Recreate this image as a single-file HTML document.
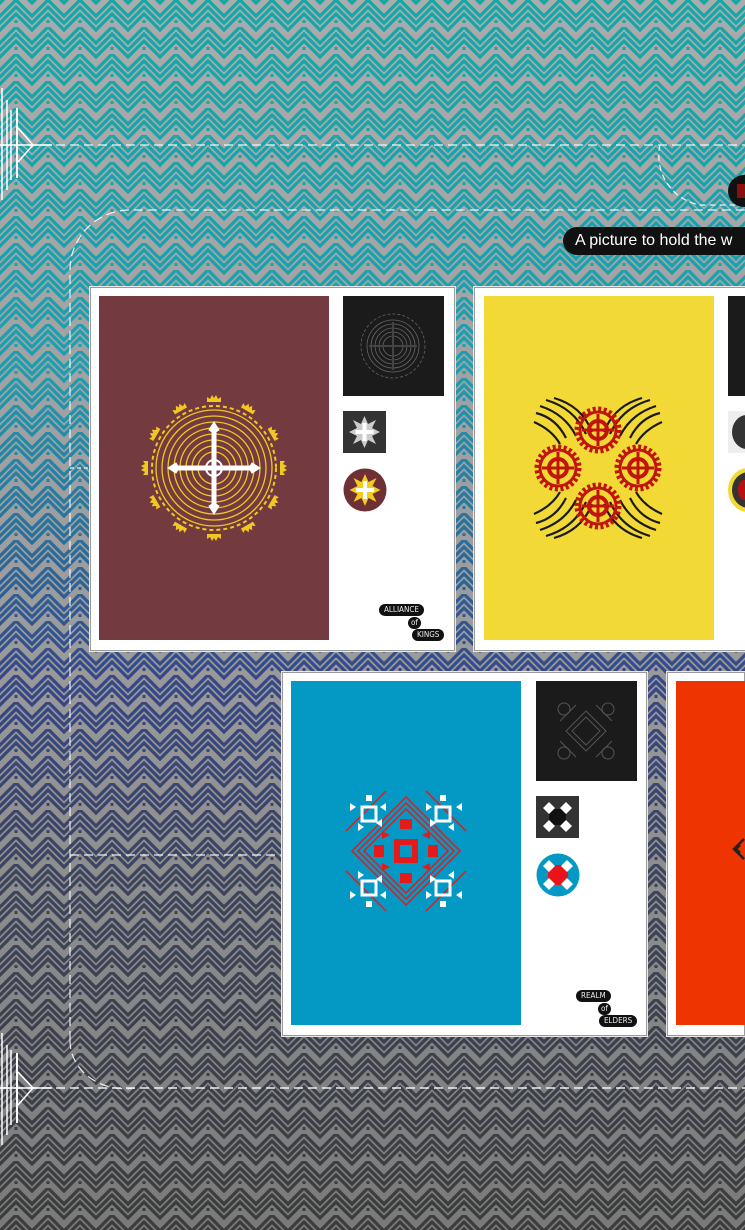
<!DOCTYPE html>
<html><head><meta charset="utf-8">
<style>
html,body{margin:0;padding:0;width:745px;height:1230px;overflow:hidden;position:relative;font-family:"Liberation Sans",sans-serif}
.bg{position:absolute;left:0;top:0}
.frame{position:absolute;border:1px solid #e8e8e8;background:#fff;box-shadow:0 0 0 1px #9a9a9a inset,0 0 0 3px #fff inset}
.abs{position:absolute}
.pill{position:absolute;background:#111;color:#fff;border-radius:12px 0 0 12px;font-family:"Liberation Sans",sans-serif;overflow:hidden}
.lbl{position:absolute;background:#111;color:#eee;font-size:8px;line-height:12px;border-radius:6px;padding:0 5px;font-family:"DejaVu Sans Condensed","Liberation Sans",sans-serif}
</style></head><body>
<svg class="bg" width="745" height="1230" viewBox="0 0 745 1230">
<defs>
<linearGradient id="bgg" x1="0" y1="0" x2="0" y2="1">
<stop offset="0" stop-color="#ababab"/><stop offset="0.5" stop-color="#9c9c9c"/><stop offset="1" stop-color="#7a7a7a"/>
</linearGradient>
<linearGradient id="sg" x1="0" y1="0" x2="0" y2="1">
<stop offset="0" stop-color="#12a8a8"/><stop offset="0.3" stop-color="#1a9fb2"/><stop offset="0.55" stop-color="#35478a"/><stop offset="0.72" stop-color="#3c435c"/><stop offset="1" stop-color="#3b3c3a"/>
</linearGradient>
<pattern id="chev" width="32" height="27" patternUnits="userSpaceOnUse">
<g fill="none" stroke="#fff" stroke-width="3.2">
<polyline points="-2,18 16,0 34,18"/>
<polyline points="-2,25 16,7 34,25"/>
<polyline points="-2,32 16,14 34,32"/>
<polyline points="-2,-9 16,-27 34,-9"/>
<polyline points="-2,-2 16,-20 34,-2"/>
<polyline points="-2,5 16,-13 34,5"/>
</g>
<rect x="14.5" y="20" width="3" height="3" fill="#fff"/>
</pattern>
<mask id="m"><rect width="745" height="1230" fill="url(#chev)"/></mask>
</defs>
<rect width="745" height="1230" fill="url(#bgg)"/>
<rect width="745" height="1230" fill="url(#sg)" mask="url(#m)"/>
<g stroke="#fff" fill="none" stroke-width="1.2" opacity="0.9">
<line x1="0" y1="145" x2="745" y2="145" stroke-dasharray="9 5"/>
<line x1="0" y1="1088" x2="745" y2="1088" stroke-dasharray="9 5" stroke-width="1.5"/>
<path d="M70 1040 V270 A60 60 0 0 1 130 210 H745" stroke-dasharray="9 5"/>
<path d="M70 1040 A55 48 0 0 0 135 1088" stroke-dasharray="9 5"/>
<path d="M660 145 A50 50 0 0 0 700 205 H745" stroke-dasharray="6 4"/>
<line x1="70" y1="468" x2="89" y2="468" stroke-dasharray="4 3"/>
<line x1="70" y1="855" x2="281" y2="855" stroke-dasharray="9 5"/>
</g>
<g stroke="#fff" fill="none" stroke-width="1.5">
<line x1="2" y1="88" x2="2" y2="200"/><line x1="7" y1="100" x2="7" y2="190"/><line x1="11" y1="110" x2="11" y2="180"/><line x1="17" y1="108" x2="17" y2="178" stroke-width="2"/>
<path d="M18 128 L33 145 L18 162 M0 145 H52"/>
<line x1="2" y1="1033" x2="2" y2="1145"/><line x1="7" y1="1045" x2="7" y2="1135"/><line x1="11" y1="1050" x2="11" y2="1125"/><line x1="17" y1="1053" x2="17" y2="1123" stroke-width="2"/>
<path d="M18 1072 L33 1088 L18 1105 M0 1088 H52"/>
</g>
</svg>

<div class="pill" style="left:728px;top:175px;width:17px;height:32px;border-radius:16px 0 0 16px"><div style="position:absolute;left:9px;top:9px;width:8px;height:14px;background:#8a1010"></div></div>
<div class="pill" style="left:563px;top:227px;width:170px;height:28px;font-size:16px;line-height:28px;padding-left:12px;white-space:nowrap;border-radius:14px 0 0 14px">A picture to hold the w</div>

<!-- card 1 -->
<div class="frame" style="left:89px;top:286px;width:365px;height:364px"></div>
<div class="abs" style="left:99px;top:296px;width:230px;height:344px;background:#733a40"></div>
<svg class="abs" style="left:99px;top:296px" width="230" height="344">
<g transform="translate(115,172)" fill="none" stroke="#f0c820" stroke-width="1.3">
<circle r="58"/><circle r="52"/><circle r="46"/><circle r="40"/><circle r="34"/><circle r="28"/><circle r="22"/><circle r="16"/>
<circle r="62" stroke-dasharray="4 3" stroke-width="2"/>
</g>
<g transform="translate(115,172)" fill="#f0c820">
<g id="cr"><path d="M-7 -66 h14 v-5 l-3 2 -2 -4 -2 3 -2 -3 -2 4 -3 -2z"/></g>
<use href="#cr" transform="rotate(30)"/><use href="#cr" transform="rotate(60)"/><use href="#cr" transform="rotate(90)"/><use href="#cr" transform="rotate(120)"/><use href="#cr" transform="rotate(150)"/><use href="#cr" transform="rotate(180)"/><use href="#cr" transform="rotate(210)"/><use href="#cr" transform="rotate(240)"/><use href="#cr" transform="rotate(270)"/><use href="#cr" transform="rotate(300)"/><use href="#cr" transform="rotate(330)"/>
</g>
<g transform="translate(115,172)" fill="#fff" stroke="#fff">
<rect x="-2" y="-40" width="4" height="80"/><rect x="-40" y="-2" width="80" height="4"/>
<path d="M0 -46 l5 8 -5 3 -5 -3z M0 46 l5 -8 -5 -3 -5 3z M-46 0 l8 5 3 -5 -3 -5z M46 0 l-8 5 -3 -5 3 -5z"/>
<circle r="8" fill="none" stroke-width="2"/>
</g>
</svg>
<div class="abs" style="left:343px;top:296px;width:101px;height:100px;background:#1b1b1b"></div>
<svg class="abs" style="left:343px;top:296px" width="101" height="100"><g transform="translate(50,50)" fill="none" stroke="#666" stroke-width="0.8"><circle r="32" stroke-dasharray="3 2"/><circle r="26"/><circle r="22"/><circle r="18"/><circle r="14"/><circle r="10"/><path d="M0 -24V24M-24 0H24" stroke="#444" stroke-width="2"/></g></svg>
<div class="abs" style="left:343px;top:411px;width:43px;height:42px;background:#333"></div>
<svg class="abs" style="left:343px;top:411px" width="43" height="42"><polygon points="21.5,5 25,13 33,9 29,17 37,21 29,25 33,33 25,29 21.5,37 18,29 10,33 14,25 6,21 14,17 10,9 18,13" fill="#ccc"/><path d="M21.5 12V30M12.5 21H30.5" stroke="#fff" stroke-width="4"/></svg>
<svg class="abs" style="left:343px;top:468px" width="44" height="44"><circle cx="22" cy="22" r="21.5" fill="#6e2f35"/><polygon points="22,6 25.5,14 33.5,10 29.5,18 37.5,22 29.5,26 33.5,34 25.5,30 22,38 18.5,30 10.5,34 14.5,26 6.5,22 14.5,18 10.5,10 18.5,14" fill="#f3cc20"/><path d="M22 13V31M13 22H31" stroke="#fff" stroke-width="4"/></svg>
<div class="lbl" style="left:379px;top:604px">ALLIANCE</div>
<div class="lbl" style="left:408px;top:617px;padding:0 3px">of</div>
<div class="lbl" style="left:412px;top:629px">KINGS</div>

<!-- card 2 -->
<div class="frame" style="left:473px;top:286px;width:290px;height:364px"></div>
<div class="abs" style="left:484px;top:296px;width:230px;height:344px;background:#f3d936"></div>
<svg class="abs" style="left:484px;top:296px" width="230" height="344">
<g fill="none" stroke="#1a1a1a" stroke-width="2.2">
<g transform="translate(114,172)">
<path d="M-62 -55 q20 5 30 25 M-58 -62 q25 8 36 30 M-52 -68 q28 8 40 34 M-44 -70 q28 8 38 34 M-64 -46 q18 8 26 22"/>
<path d="M62 -55 q-20 5 -30 25 M58 -62 q-25 8 -36 30 M52 -68 q-28 8 -40 34 M44 -70 q-28 8 -38 34 M64 -46 q-18 8 -26 22"/>
<path d="M-62 55 q20 -5 30 -25 M-58 62 q25 -8 36 -30 M-52 68 q28 -8 40 -34 M-44 70 q28 -8 38 -34 M-64 46 q18 -8 26 -22"/>
<path d="M62 55 q-20 -5 -30 -25 M58 62 q-25 -8 -36 -30 M52 68 q-28 -8 -40 -34 M44 70 q-28 -8 -38 -34 M64 46 q-18 -8 -26 -22"/>
</g></g>
<g fill="none" stroke="#c0140c">
<g transform="translate(114,134)"><circle r="21" stroke-width="5" stroke-dasharray="3 2.5"/><circle r="18" stroke-width="3"/><circle r="9" stroke-width="4"/><path d="M-16 0H16M0 -16V16" stroke-width="3"/></g>
<g transform="translate(74,172)"><circle r="21" stroke-width="5" stroke-dasharray="3 2.5"/><circle r="18" stroke-width="3"/><circle r="9" stroke-width="4"/><path d="M-16 0H16M0 -16V16" stroke-width="3"/></g>
<g transform="translate(154,172)"><circle r="21" stroke-width="5" stroke-dasharray="3 2.5"/><circle r="18" stroke-width="3"/><circle r="9" stroke-width="4"/><path d="M-16 0H16M0 -16V16" stroke-width="3"/></g>
<g transform="translate(114,210)"><circle r="21" stroke-width="5" stroke-dasharray="3 2.5"/><circle r="18" stroke-width="3"/><circle r="9" stroke-width="4"/><path d="M-16 0H16M0 -16V16" stroke-width="3"/></g>
</g>
</svg>
<div class="abs" style="left:728px;top:296px;width:17px;height:100px;background:#1b1b1b"></div>
<div class="abs" style="left:728px;top:411px;width:17px;height:42px;background:#eee;overflow:hidden"><div style="position:absolute;left:4px;top:4px;width:30px;height:34px;border-radius:50%;background:#333"></div></div>
<div class="abs" style="left:728px;top:468px;width:17px;height:44px;overflow:hidden"><div style="position:absolute;left:0;top:0;width:40px;height:44px;border-radius:50%;background:#f3d936"></div><div style="position:absolute;left:4px;top:4px;width:34px;height:36px;border-radius:50%;background:#333"></div><div style="position:absolute;left:10px;top:12px;width:12px;height:20px;border-radius:50%;background:#b81010"></div></div>

<!-- card 3 -->
<div class="frame" style="left:281px;top:671px;width:365px;height:364px"></div>
<div class="abs" style="left:291px;top:681px;width:230px;height:344px;background:#0399c4"></div>
<svg class="abs" style="left:291px;top:681px" width="230" height="344">
<g transform="translate(115,170)">
<g fill="none" stroke="#e51a1a" stroke-width="1.5">
<path d="M0 -48 L48 0 L0 48 L-48 0Z"/><path d="M0 -42 L42 0 L0 42 L-42 0Z"/><path d="M0 -54 L54 0 L0 54 L-54 0Z"/>
<path d="M-60 -20 L-20 -60 M60 -20 L20 -60 M-60 20 L-20 60 M60 20 L20 60"/>
</g>
<g fill="#e51a1a"><rect x="-6" y="-32" width="12" height="10"/><rect x="-6" y="22" width="12" height="10"/><rect x="-32" y="-6" width="10" height="12"/><rect x="22" y="-6" width="10" height="12"/><path d="M-12 -12h24v24h-24z M-6 -6v12h12v-12z" fill-rule="evenodd"/><path d="M-24 -20 l8 4 -8 4z M24 -20 l-8 4 8 4z M-24 20 l8 -4 -8 -4z M24 20 l-8 -4 8 -4z"/></g>
<g fill="#fff">
<g id="tt"><rect x="-44" y="-44" width="14" height="14" fill="none" stroke="#fff" stroke-width="3"/><rect x="-40" y="-56" width="6" height="6"/><path d="M-56 -48l6 4 -6 4z M-20 -48l-6 4 6 4z M-48 -28l6 4 -6 4z M-30 -28l6 -4 0 8z"/></g>
<use href="#tt" transform="scale(-1,1)"/><use href="#tt" transform="scale(1,-1)"/><use href="#tt" transform="scale(-1,-1)"/>
</g></g>
</svg>
<div class="abs" style="left:536px;top:681px;width:101px;height:100px;background:#1b1b1b"></div>
<svg class="abs" style="left:536px;top:681px" width="101" height="100"><g transform="translate(50,50)" fill="none" stroke="#555" stroke-width="1"><path d="M0 -20L20 0 0 20 -20 0Z M0 -14L14 0 0 14 -14 0Z M-26 -10L-10 -26 M26 -10L10 -26 M-26 10L-10 26 M26 10L10 26"/><circle cx="-22" cy="-22" r="6"/><circle cx="22" cy="-22" r="6"/><circle cx="-22" cy="22" r="6"/><circle cx="22" cy="22" r="6"/></g></svg>
<div class="abs" style="left:536px;top:796px;width:43px;height:42px;background:#333"></div>
<svg class="abs" style="left:536px;top:796px" width="43" height="42"><rect x="13" y="13" width="17" height="16" fill="#111"/><g fill="#fff"><path d="M13 6l6 6 -6 6 -6 -6z M30 6l6 6 -6 6 -6 -6z M13 24l6 6 -6 6 -6 -6z M30 24l6 6 -6 6 -6 -6z"/></g></svg>
<svg class="abs" style="left:536px;top:853px" width="44" height="44"><circle cx="22" cy="22" r="21.5" fill="#0399c4"/><rect x="12" y="12" width="20" height="20" fill="#e8141a"/><g fill="#fff"><path d="M13 7l6 6 -6 6 -6 -6z M31 7l6 6 -6 6 -6 -6z M13 25l6 6 -6 6 -6 -6z M31 25l6 6 -6 6 -6 -6z"/></g></svg>
<div class="lbl" style="left:576px;top:990px">REALM</div>
<div class="lbl" style="left:598px;top:1003px;padding:0 3px">of</div>
<div class="lbl" style="left:599px;top:1015px">ELDERS</div>

<!-- card 4 -->
<div class="frame" style="left:666px;top:671px;width:78px;height:364px;border-right:0"></div>
<div class="abs" style="left:676px;top:681px;width:69px;height:344px;background:#ee3400"></div>
<svg class="abs" style="left:730px;top:835px" width="15" height="30"><path d="M14 4 L4 14 L14 24 M10 10 L6 14 L10 18" fill="none" stroke="#222" stroke-width="2.5"/></svg>
</body></html>
